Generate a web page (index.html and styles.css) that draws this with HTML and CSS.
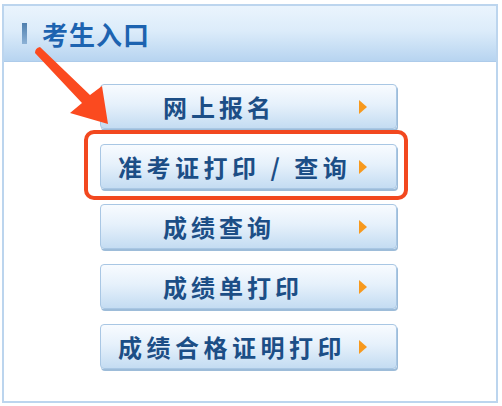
FILE: index.html
```html
<!DOCTYPE html>
<html lang="zh-CN">
<head>
  <meta charset="UTF-8">
  <title>考生入口</title>
  <link rel="stylesheet" href="styles.css">
</head>
<body>

<div class="panel">
  <div class="panel-head">
    <span class="head-mark"></span>
    <h2>考生入口</h2>
  </div>

  <div class="entry-list">
    <a href="#" class="entry">网上报名<span class="tri"></span></a>
    <a href="#" class="entry entry-wide marked">准考证打印 / 查询<span class="tri"></span></a>
    <a href="#" class="entry">成绩查询<span class="tri"></span></a>
    <a href="#" class="entry">成绩单打印<span class="tri"></span></a>
    <a href="#" class="entry entry-wide">成绩合格证明打印<span class="tri"></span></a>
  </div>

  <!-- annotation arrow -->
  <svg class="pointer" width="120" height="130" viewBox="0 0 120 130">
    <path d="M33 51 Q33 46 38 45 L88 93 L100 84 L106 122 L68 111 L80 101 Z" fill="#fb4a1f"/>
  </svg>
</div>

</body>
</html>
```

FILE: styles.css
```css
/* General */
body {
  margin: 0;
  background: #fff;
  font-family: "Noto Sans CJK SC", "Noto Sans", sans-serif;
}

/* Panel */
.panel {
  position: relative;
  margin: 4px 4px 3px 2px;
  height: 395px;
  border: 2px solid #bcd5ee;
  background: #fff;
}
.panel-head {
  display: flex;
  align-items: center;
  height: 55px;
  padding-left: 18px;
  background: linear-gradient(to bottom, #eaf4fd 0%, #dcecfa 45%, #b7d4f0 100%);
  border-bottom: 1px solid #adcbea;
}
.head-mark {
  width: 5px;
  height: 21px;
  background: linear-gradient(to bottom, #4f7fae, #8db2d6);
}
.panel-head h2 {
  margin: 0 0 0 15px;
  font-size: 26px;
  font-weight: 700;
  color: #1d63b0;
  letter-spacing: 1px;
}

/* Entry buttons */
.entry-list {
  display: flex;
  flex-direction: column;
  gap: 15px;
  padding: 22px 0 0 96px;
}
.entry {
  position: relative;
  display: flex;
  align-items: center;
  box-sizing: border-box;
  width: 297px;
  height: 45px;
  padding-left: 62px;
  font-size: 24px;
  font-weight: 700;
  letter-spacing: 4px;
  color: #1c4e86;
  text-decoration: none;
  white-space: pre;
  background: linear-gradient(to bottom, #f8fbff 0%, #e6f1fb 45%, #c4dcf2 100%);
  border: 1px solid #a9c7e4;
  border-radius: 4px;
  box-shadow: 1px 2px 0 #9dbcd9;
}
.entry-wide {
  padding-left: 17px;
  letter-spacing: 4.5px;
}
.tri {
  margin-left: auto;
  margin-right: 29px;
  width: 0;
  height: 0;
  border-top: 7px solid transparent;
  border-bottom: 7px solid transparent;
  border-left: 8px solid #f7991e;
}

/* red highlight frame */
.marked::after {
  content: "";
  position: absolute;
  top: -15px;
  left: -17px;
  right: -12px;
  bottom: -12px;
  border: 4px solid #f2481f;
  border-radius: 10px;
}

.pointer {
  position: absolute;
  left: -2px;
  top: -4px;
}
```
